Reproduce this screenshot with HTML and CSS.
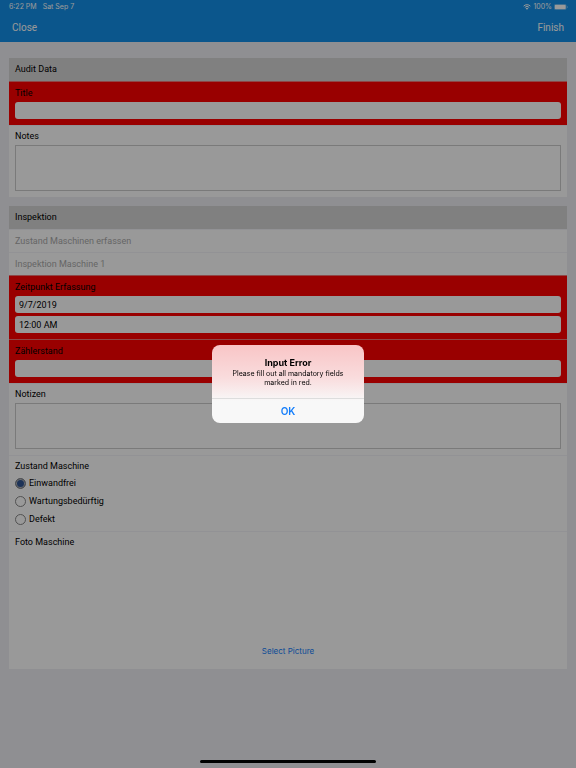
FILE: index.html
```html
<!DOCTYPE html>
<html lang="en">
<head>
<meta charset="utf-8">
<meta name="viewport" content="width=device-width, initial-scale=1">
<title>Audit</title>
<link rel="stylesheet" href="styles.css">
</head>
<body>
<header class="topbar">
  <div class="status">
    <span>6:22 PM</span>
    <span>Sat Sep 7</span>
    <span class="status-right">
      <svg class="wifi" viewBox="0 0 16 12" aria-hidden="true"><path d="M1.2 4.2a9.6 9.6 0 0 1 13.6 0M3.6 6.8a6.2 6.2 0 0 1 8.8 0" fill="none" stroke="currentColor" stroke-width="2"/><path d="M8 11.6 5.4 9a3.7 3.7 0 0 1 5.2 0z" fill="currentColor"/></svg>
      <span>100%</span>
      <svg class="battery" viewBox="0 0 28 12" aria-hidden="true"><rect x=".5" y=".5" width="24" height="11" rx="3" fill="none" stroke="currentColor" opacity=".5"/><rect x="1.500" y="1.500" width="22" height="9" rx="2" fill="currentColor"/><path d="M26 4v4q1.600-.5 1.600-2T26 4" fill="currentColor" opacity=".5"/></svg>
    </span>
  </div>
  <nav class="nav">
    <button type="button">Close</button>
    <button type="button">Finish</button>
  </nav>
</header>

<main class="form">
  <section class="card">
    <h2 class="card-title">Audit Data</h2>
    <div class="row missing">
      <label for="title">Title</label>
      <input class="field" id="title" type="text">
    </div>
    <div class="row">
      <label for="notes">Notes</label>
      <textarea class="area" id="notes"></textarea>
    </div>
  </section>

  <section class="card">
    <h2 class="card-title">Inspektion</h2>
    <p class="row info">Zustand Maschinen erfassen</p>
    <p class="row info">Inspektion Maschine 1</p>
    <div class="row missing">
      <label for="date">Zeitpunkt Erfassung</label>
      <input class="field" id="date" type="text" value="9/7/2019">
      <input class="field" type="text" value="12:00 AM" aria-label="Uhrzeit">
    </div>
    <div class="row missing">
      <label for="meter">Zählerstand</label>
      <input class="field" id="meter" type="text">
    </div>
    <div class="row">
      <label for="notizen">Notizen</label>
      <textarea class="area" id="notizen"></textarea>
    </div>
    <fieldset class="row choices">
      <legend>Zustand Maschine</legend>
      <label class="choice"><input type="radio" name="state" checked><span>Einwandfrei</span></label>
      <label class="choice"><input type="radio" name="state"><span>Wartungsbedürftig</span></label>
      <label class="choice"><input type="radio" name="state"><span>Defekt</span></label>
    </fieldset>
    <div class="row photo">
      <h3>Foto Maschine</h3>
      <button type="button">Select Picture</button>
    </div>
  </section>
</main>

<div class="backdrop">
  <div class="alert" role="alertdialog" aria-labelledby="alert-title" aria-describedby="alert-text">
    <div class="alert-body">
      <h2 id="alert-title">Input Error</h2>
      <p id="alert-text">Please fill out all mandatory fields marked in red.</p>
    </div>
    <button type="button">OK</button>
  </div>
</div>
<div class="home-indicator"></div>
</body>
</html>
```
FILE: styles.css
```css
* {
  box-sizing: border-box;
}

body {
  margin: 0;
  min-height: 100vh;
  background: #efeff4;
  color: #000;
  font: 9px/12px Roboto, "Liberation Sans", sans-serif;
}

h2,
h3,
p {
  margin: 0;
  font-size: inherit;
  font-weight: 400;
}

button {
  padding: 0;
  border: 0;
  background: none;
  color: inherit;
  font: inherit;
}

.topbar {
  height: 42px;
  background: #1390ea;
  color: #fff;
}

.status {
  display: flex;
  align-items: center;
  gap: 6px;
  height: 14px;
  padding: 0 8px 0 9px;
  font-family: Inter, "Liberation Sans", sans-serif;
  font-size: 7px;
}

.status-right {
  display: flex;
  align-items: center;
  gap: 2px;
  margin-left: auto;
}

.wifi {
  width: 8px;
  height: 6px;
}

.battery {
  width: 14px;
  height: 6px;
}

.nav {
  display: flex;
  align-items: center;
  justify-content: space-between;
  height: 28px;
  padding: 0 12px;
  font-size: 10px;
}

.form {
  display: grid;
  gap: 9px;
  padding: 16px 9px;
}

.card {
  background: #fff;
}

.card-title {
  padding: 5px 6px 6px;
  background: #d5d5d5;
}

.row {
  display: flex;
  flex-direction: column;
  gap: 3px;
  padding: 4px 6px 6px;
  border-top: 1px solid #f4f4f8;
}

.row.info {
  padding: 5px 6px;
  color: #aaa;
}

.row.missing {
  padding-top: 5px;
  border-top-color: #e77;
  background: #f00;
  background-clip: padding-box;
}

.field {
  width: 100%;
  height: 17px;
  margin: 0;
  padding: 0 4px;
  border: 0;
  border-radius: 3px;
  background: #fff;
  color: inherit;
  font: inherit;
}

.area {
  display: block;
  width: 100%;
  height: 46px;
  margin: 0;
  border: 1px solid #ccc;
  background: #fff;
  font: inherit;
  resize: none;
}

.choices {
  gap: 4px;
  margin: 0;
  padding-bottom: 5px;
  border-width: 1px 0 0;
}

.choices legend {
  float: left;
  padding: 0;
}

.choice {
  display: flex;
  align-items: center;
  gap: 3px;
  height: 14px;
}

.choice input {
  appearance: none;
  width: 11px;
  height: 11px;
  margin: 0;
  border: 1px solid #888;
  border-radius: 50%;
}

.choice input:checked {
  background: #315693;
  box-shadow: inset 0 0 0 1px #bbb;
}

.photo {
  height: 138px;
  justify-content: space-between;
}

.photo button {
  align-self: center;
  padding-bottom: 6px;
  color: #147efb;
  font-family: Inter, "Liberation Sans", sans-serif;
  font-size: 8px;
}

.backdrop {
  position: fixed;
  inset: 0;
  display: grid;
  place-items: center;
  background: rgba(0, 0, 0, 0.4);
}

.alert {
  width: 152px;
  overflow: hidden;
  border-radius: 8px;
  background: linear-gradient(#f9c5c6, #f9dcdd 42%, #f8f8f8 72%);
  font-family: Inter, "Liberation Sans", sans-serif;
  text-align: center;
}

.alert-body {
  padding: 11px 16px;
  font-size: 7px;
  line-height: 9px;
}

.alert h2 {
  font-size: 9px;
  font-weight: 700;
  line-height: 13px;
}

.alert button {
  width: 100%;
  height: 25px;
  border-top: 1px solid #ddd;
  color: #147efb;
  font-size: 10px;
  font-weight: 600;
}

.home-indicator {
  position: fixed;
  right: 0;
  bottom: 5px;
  left: 0;
  width: 176px;
  height: 3px;
  margin: 0 auto;
  border-radius: 2px;
  background: #000;
}
```
